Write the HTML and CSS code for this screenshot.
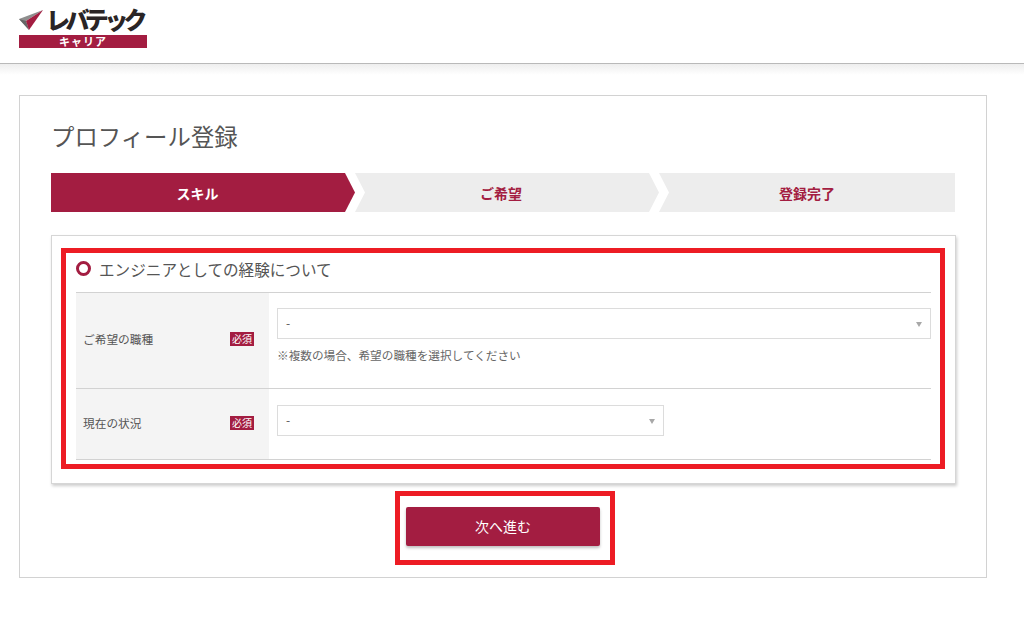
FILE: index.html
```html
<!DOCTYPE html>
<html lang="ja">
<head>
<meta charset="utf-8">
<title>プロフィール登録</title>
<link rel="stylesheet" href="styles.css">
</head>
<body>
<header class="site-header">
  <div class="logo">
    <div class="logo-top">
      <svg class="logo-mark" width="25" height="21" viewBox="0 0 25 21">
        <polygon points="0,9 24,0 7,11 10,20" fill="#8e8e8e"/>
        <polygon points="0,9 7,11 10,20" fill="#666"/>
        <polygon points="24,0 7,11 10,20" fill="#a31d41"/>
      </svg>
      <span class="logo-name">レバテック</span>
    </div>
    <div class="logo-bar">キャリア</div>
  </div>
</header>
<main class="page">
  <section class="card">
    <h1 class="title">プロフィール登録</h1>
    <ol class="steps">
      <li class="step step-first step-active">スキル</li>
      <li class="step step-mid">ご希望</li>
      <li class="step step-last">登録完了</li>
    </ol>
    <div class="panel">
      <h2 class="section-head"><span class="ring"></span>エンジニアとしての経験について</h2>
      <div class="row row-one">
        <div class="label"><span>ご希望の職種</span><span class="req">必須</span></div>
        <div class="field">
          <div class="select select-full">-<span class="caret"></span></div>
          <p class="note">※複数の場合、希望の職種を選択してください</p>
        </div>
      </div>
      <div class="row row-two">
        <div class="label"><span>現在の状況</span><span class="req">必須</span></div>
        <div class="field">
          <div class="select select-half">-<span class="caret"></span></div>
        </div>
      </div>
      <div class="mark mark-panel"></div>
    </div>
    <div class="actions">
      <button class="next" type="button">次へ進む</button>
      <div class="mark mark-button"></div>
    </div>
  </section>
</main>
</body>
</html>
```
FILE: styles.css
```css
* { box-sizing: border-box; }
html, body { margin: 0; padding: 0; background: #fff; }
body {
  font-family: "Noto Sans CJK JP", "Noto Sans", sans-serif;
  color: #555;
  height: 637px;
  overflow: hidden;
}
.site-header {
  height: 64px;
  border-bottom: 1px solid #b9b9b9;
  padding: 9px 0 0 19px;
  position: relative;
}
.site-header::after {
  content: "";
  position: absolute;
  left: 0;
  right: 0;
  top: 64px;
  height: 11px;
  background: linear-gradient(#eeeeee, #fff);
}
.logo { width: 128px; }
.logo-top { display: flex; align-items: flex-start; height: 26px; }
.logo-mark { flex: none; margin-top: 1px; }
.logo-name {
  font-size: 24px;
  font-weight: 900;
  line-height: 19px;
  color: #2a2526;
  letter-spacing: -4.6px;
  margin-left: 2px;
  white-space: nowrap;
}
.logo-bar {
  height: 13px;
  background: #a31d41;
  color: #fff;
  font-size: 11px;
  line-height: 13px;
  font-weight: 700;
  text-align: center;
  letter-spacing: 1px;
}
.page { padding: 31px 37px 0 19px; }
.card {
  height: 483px;
  border: 1px solid #d2d2d2;
  padding: 0 31px;
  position: relative;
  background: #fff;
}
.title {
  margin: 0;
  padding-top: 24px;
  font-size: 23.4px;
  line-height: 32px;
  font-weight: 400;
  color: #555;
}
.steps {
  list-style: none;
  margin: 21px 0 0;
  padding: 0;
  display: flex;
  width: 904px;
  height: 39px;
}
.step {
  display: flex;
  align-items: center;
  justify-content: center;
  font-size: 14px;
  font-weight: 700;
  color: #a31d41;
  background: #ededed;
}
.step-first {
  width: 304px;
  clip-path: polygon(0 0, 294px 0, 100% 50%, 294px 100%, 0 100%);
  padding-right: 11px;
}
.step-mid {
  width: 304px;
  padding-right: 12px;
  clip-path: polygon(0 0, 294px 0, 100% 50%, 294px 100%, 0 100%, 10px 50%);
}
.step-last {
  width: 296px;
  clip-path: polygon(0 0, 100% 0, 100% 100%, 0 100%, 10px 50%);
}
.step-active { background: #a31d41; color: #fff; }
.panel {
  position: relative;
  width: 905px;
  height: 249px;
  margin-top: 23px;
  border: 1px solid #d6d6d6;
  box-shadow: 1px 2px 3px rgba(0, 0, 0, .2);
  padding: 0 24px;
  background: #fff;
}
.section-head {
  margin: 0;
  height: 57px;
  display: flex;
  align-items: center;
  font-size: 15.6px;
  font-weight: 400;
  color: #555;
  border-bottom: 1px solid #d2d2d2;
  padding-top: 12px;
  padding-bottom: 3px;
}
.ring {
  width: 15px;
  height: 15px;
  border: 3px solid #a31d41;
  border-radius: 50%;
  margin-right: 8px;
  flex: none;
}
.row { display: flex; border-bottom: 1px solid #d2d2d2; }
.row-one { height: 96px; }
.row-two { height: 71px; }
.label {
  width: 193px;
  flex: none;
  background: #f4f4f4;
  display: flex;
  align-items: center;
  justify-content: space-between;
  padding: 0 15px 0 7px;
  font-size: 11.7px;
  color: #555;
}
.row-one .label { padding-bottom: 4px; }
.row-two .label { padding-bottom: 3px; }
.req {
  width: 24px;
  height: 14px;
  background: #a31d41;
  color: #fff;
  font-size: 10px;
  line-height: 14px;
  text-align: center;
  white-space: nowrap;
  overflow: hidden;
}
.field { flex: 1; padding: 15px 0 0 8px; }
.row-two .field { padding-top: 16px; }
.select {
  position: relative;
  height: 31px;
  border: 1px solid #dcdcdc;
  background: #fff;
  font-size: 12px;
  line-height: 28px;
  padding-left: 8px;
  color: #555;
}
.select-half { width: 387px; }
.caret {
  position: absolute;
  right: 8px;
  top: 13px;
  width: 0;
  height: 0;
  border-left: 3px solid transparent;
  border-right: 3px solid transparent;
  border-top: 5px solid #a8a8a8;
}
.note {
  margin: 7px 0 0;
  font-size: 11.65px;
  line-height: 18px;
  color: #666;
}
.actions {
  position: relative;
  display: flex;
  justify-content: center;
  margin-top: 23px;
  width: 904px;
}
.next {
  width: 194px;
  height: 39px;
  border: 0;
  border-radius: 2px;
  background: #a31d41;
  color: #fff;
  font-family: inherit;
  font-size: 14px;
  box-shadow: 0 2px 3px rgba(0, 0, 0, .25);
  padding: 0 0 2px;
}
.mark {
  position: absolute;
  border: 5px solid #ed1c24;
  pointer-events: none;
}
.mark-panel { left: 9px; top: 12px; width: 884px; height: 221px; }
.mark-button { left: 344px; top: -16px; width: 220px; height: 74px; }
```
